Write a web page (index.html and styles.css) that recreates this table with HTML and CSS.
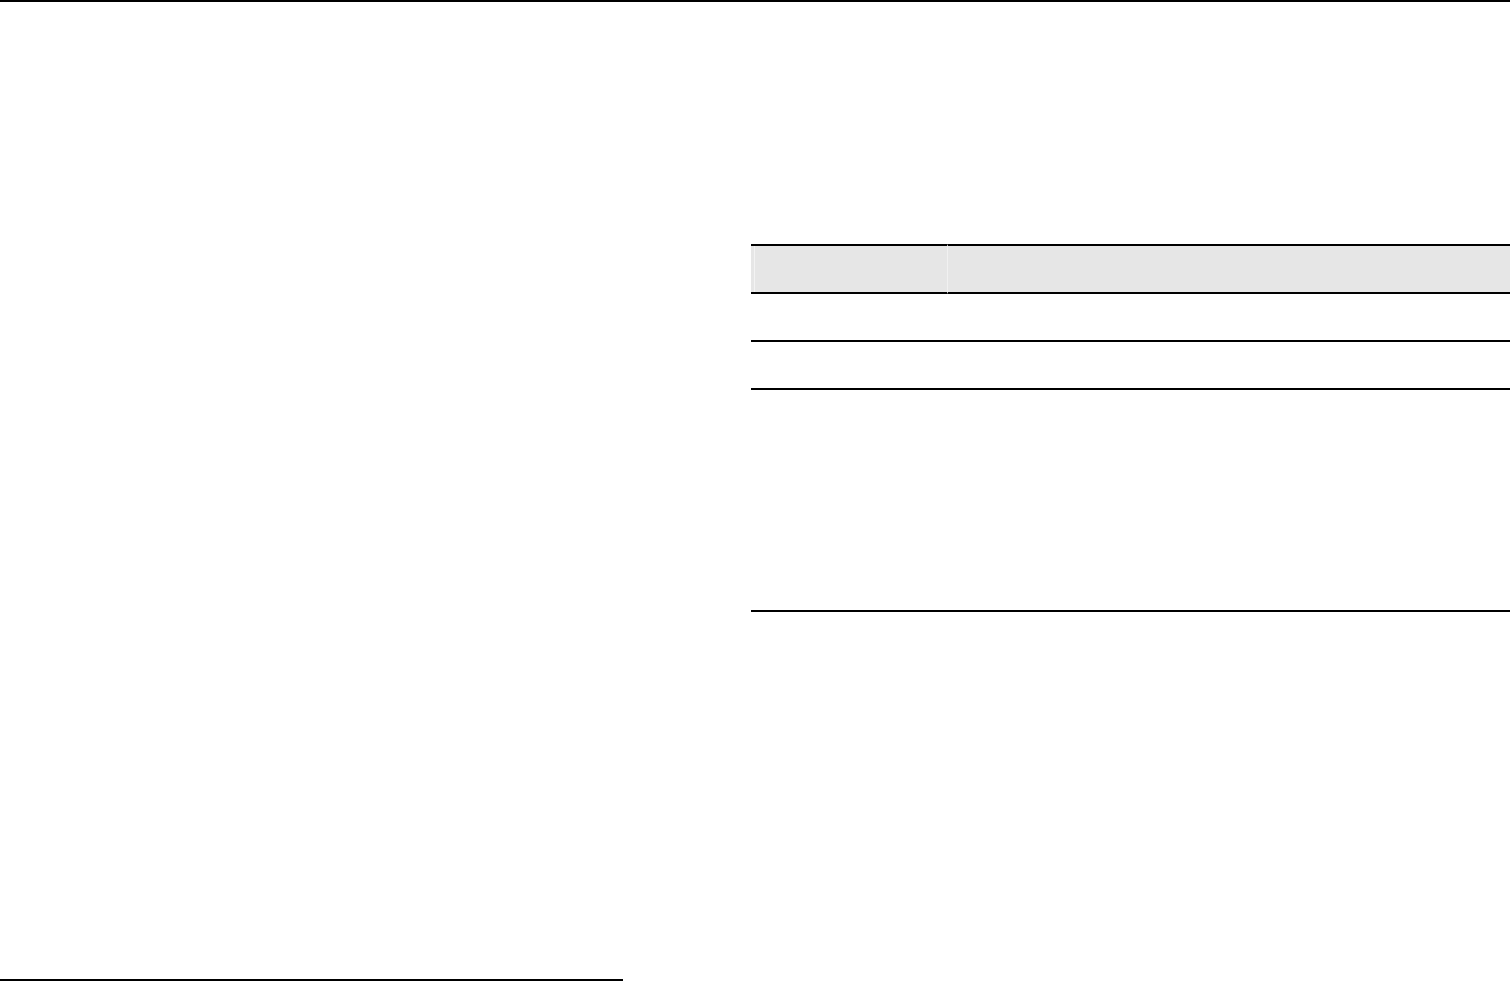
FILE: index.html
```html
<!DOCTYPE html>
<html lang="en">
<head>
    <meta charset="UTF-8">
    <meta name="viewport" content="width=device-width, initial-scale=1.0">
    <title>Page</title>
    <link rel="stylesheet" href="styles.css">
</head>
<body>
    <div class="page">
        <div class="top-rule"></div>
        <div class="content">
            <div class="left-col"><!-- spacer --></div>
            <div class="right-col">
                <table class="grid">
                    <thead>
                        <tr>
                            <th class="col-first"></th>
                            <th class="col-second"></th>
                        </tr>
                    </thead>
                    <tbody>
                        <tr class="row"><td></td><td></td></tr>
                        <tr class="row"><td></td><td></td></tr>
                        <tr class="row-tall"><td></td><td></td></tr>
                    </tbody>
                </table>
            </div>
        </div>
        <div class="footnote-rule"></div>
    </div>
</body>
</html>
```

FILE: styles.css
```css
body {
    margin: 0;
    font-family: "Liberation Serif", serif;
    font-size: 12pt;
    color: black;
    background-color: white;
}
.page {
    display: flex;
    flex-direction: column;
    width: 1511px;
    height: 981px;
    overflow: hidden;
}
.top-rule {
    width: 1510px;
    height: 2px;
    background-color: black;
}
.content {
    display: flex;
}
.left-col {
    width: 751px;
    flex-shrink: 0;
}
.right-col {
    padding-top: 242px;
}
.grid {
    width: 759px;
    border-collapse: separate;
    border-spacing: 0;
}
.grid th,
.grid td {
    padding: 0;
    box-sizing: border-box;
}
.grid th {
    height: 50px;
    background-color: #e6e6e6;
    border-top: 2px solid black;
    border-bottom: 2px solid black;
}
.col-first {
    width: 196px;
    box-shadow: inset 3px 0 0 #e6e6e6, inset 4px 0 0 #f3f3f3;
}
.col-second {
    border-left: 1px solid #f1f1f1;
}
.grid td {
    border-bottom: 2px solid black;
}
.row td {
    height: 48px;
}
.row-tall td {
    height: 222px;
}
.footnote-rule {
    margin-top: auto;
    margin-bottom: 0;
    width: 623px;
    height: 2px;
    background-color: black;
}
```
